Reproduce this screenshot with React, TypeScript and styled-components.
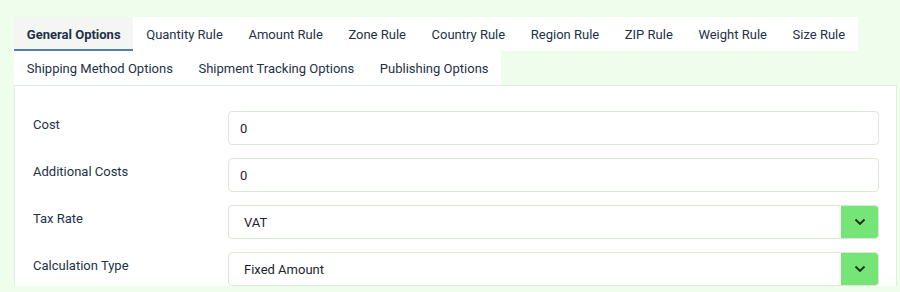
import React from "react";
import styled, { createGlobalStyle } from "styled-components";

const GlobalStyle = createGlobalStyle`
  html, body {
    margin: 0;
    padding: 0;
    background: #effdec;
    font-family: Roboto, "Liberation Sans", sans-serif;
  }
`;

const Page = styled.div`
  padding: 17px 3px 0 14px;
`;

const TabStrip = styled.div`
  display: flex;
  flex-direction: column;
  align-items: flex-start;
`;

const TabRow = styled.div`
  display: flex;
  background: #ffffff;
`;

const Tab = styled.div<{ $active?: boolean }>`
  height: 34px;
  box-sizing: border-box;
  padding: 2px 12.8px 0 12.8px;
  display: flex;
  align-items: center;
  font-size: 13px;
  color: #22324a;
  font-weight: ${(p) => (p.$active ? 700 : 400)};
  background: ${(p) => (p.$active ? "#f4f6f4" : "transparent")};
  border-bottom: 2px solid ${(p) => (p.$active ? "#4f7fb8" : "transparent")};
  white-space: nowrap;
`;

const Panel = styled.div`
  background: #ffffff;
  border: 1px solid #e3ece2;
  border-bottom: none;
  padding: 25px 17px 0 18px;
  display: flex;
  flex-direction: column;
  gap: 13px;
`;

const Row = styled.div`
  display: grid;
  grid-template-columns: 195px 1fr;
  align-items: start;
`;

const Label = styled.div`
  font-size: 13px;
  color: #22324a;
  padding-top: 6px;
  line-height: 16px;
`;

const Field = styled.div`
  height: 34px;
  box-sizing: border-box;
  border: 1px solid #dce6d9;
  border-radius: 4px;
  display: flex;
  align-items: center;
  font-size: 13px;
  color: #1d2430;
  overflow: hidden;
  background: #fff;
`;

const FieldText = styled.span<{ $select?: boolean }>`
  flex: 1;
  padding-left: ${(p) => (p.$select ? "15px" : "11px")};
`;

const Caret = styled.div`
  width: 38px;
  align-self: stretch;
  margin: -1px -1px -1px 0;
  background: #74e576;
  display: flex;
  align-items: center;
  justify-content: center;
`;

const Chevron = () => (
  <svg width="12" height="8" viewBox="0 0 12 8">
    <path d="M1.5 1.5 L6 6 L10.5 1.5" fill="none" stroke="#1c2a1c" strokeWidth="1.8" />
  </svg>
);

const rows = [
  { label: "Cost", value: "0" },
  { label: "Additional Costs", value: "0" },
  { label: "Tax Rate", value: "VAT", select: true },
  { label: "Calculation Type", value: "Fixed Amount", select: true },
];

export default function App() {
  return (
    <Page>
      <GlobalStyle />
      <TabStrip>
        <TabRow>
          <Tab $active>General Options</Tab>
          <Tab>Quantity Rule</Tab>
          <Tab>Amount Rule</Tab>
          <Tab>Zone Rule</Tab>
          <Tab>Country Rule</Tab>
          <Tab>Region Rule</Tab>
          <Tab>ZIP Rule</Tab>
          <Tab>Weight Rule</Tab>
          <Tab>Size Rule</Tab>
        </TabRow>
        <TabRow>
          <Tab>Shipping Method Options</Tab>
          <Tab>Shipment Tracking Options</Tab>
          <Tab>Publishing Options</Tab>
        </TabRow>
      </TabStrip>
      <Panel>
        {rows.map((r) => (
          <Row key={r.label}>
            <Label>{r.label}</Label>
            <Field>
              <FieldText $select={r.select}>{r.value}</FieldText>
              {r.select && (
                <Caret>
                  <Chevron />
                </Caret>
              )}
            </Field>
          </Row>
        ))}
      </Panel>
    </Page>
  );
}
